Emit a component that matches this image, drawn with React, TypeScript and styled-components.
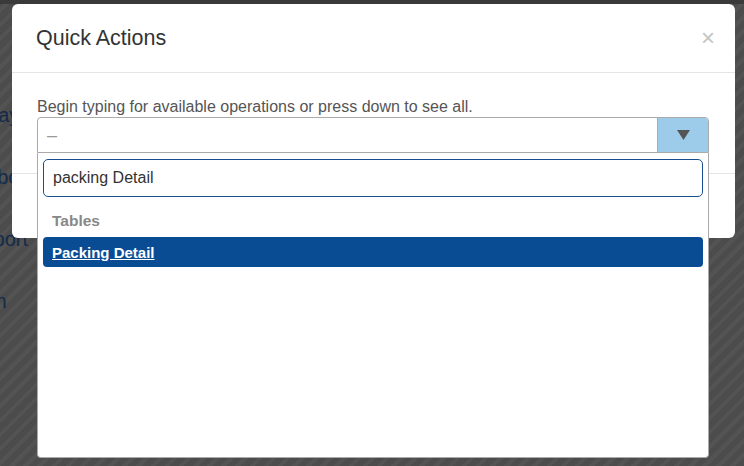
import React from "react";
import styled, { createGlobalStyle } from "styled-components";

const GlobalStyle = createGlobalStyle`
  html, body {
    margin: 0;
    padding: 0;
    height: 100%;
  }
  body {
    font-family: "Liberation Sans", Arial, Helvetica, sans-serif;
    background: repeating-linear-gradient(
      -45deg,
      #4c4c4c 0px,
      #4c4c4c 6px,
      #535353 6px,
      #535353 10px
    );
    overflow: hidden;
  }
`;

const Page = styled.div`
  position: relative;
  width: 744px;
  height: 466px;
  overflow: hidden;
`;

const TopBand = styled.div`
  height: 4px;
  background: #3a3a3a;
`;

const NavList = styled.nav`
  display: flex;
  flex-direction: column;
  padding-top: 100px;
  gap: 40px;
`;

const NavItem = styled.a<{ $shift: number }>`
  display: block;
  margin-left: ${(p) => -p.$shift}px;
  font-size: 20px;
  line-height: 22px;
  color: #132b4a;
  white-space: nowrap;
`;

const Modal = styled.div`
  position: absolute;
  left: 12px;
  top: 4px;
  width: 723px;
  height: 234px;
  background: #fff;
  border-radius: 6px;
  display: flex;
  flex-direction: column;
`;

const Header = styled.div`
  height: 68px;
  border-bottom: 1px solid #e5e5e5;
  display: flex;
  align-items: center;
  justify-content: space-between;
  padding: 0 20px 0 24px;
`;

const Title = styled.h4`
  margin: 0;
  font-size: 21.5px;
  font-weight: 400;
  color: #333;
`;

const Close = styled.button`
  border: 0;
  background: none;
  padding: 0;
  font-family: "Liberation Sans", Arial, sans-serif;
  font-size: 24px;
  font-weight: 400;
  line-height: 1;
  color: #c4c4c4;
`;

const Body = styled.div`
  padding: 24px 26px 20px 25px;
  border-bottom: 1px solid #e5e5e5;
`;

const Label = styled.label`
  display: block;
  font-size: 16px;
  line-height: 20px;
  color: #555;
`;

const SelectWrap = styled.div`
  position: relative;
`;

const SelectBox = styled.div`
  display: flex;
  height: 34px;
  border: 1px solid #aaa;
  border-radius: 4px 4px 0 0;
  background: #fff;
`;

const Placeholder = styled.span`
  flex: 1;
  display: flex;
  align-items: center;
  padding-left: 9px;
  color: #999;
  font-size: 18px;
`;

const ArrowBtn = styled.div`
  width: 50px;
  border-left: 1px solid #aaa;
  background: #9dcceb;
  border-top-right-radius: 3px;
  display: flex;
  align-items: center;
  justify-content: center;
`;

const Dropdown = styled.div`
  position: absolute;
  left: 0;
  right: 0;
  top: 36px;
  height: 305px;
  box-sizing: border-box;
  border: 1px solid #aaa;
  border-top: 0;
  border-radius: 0 0 4px 4px;
  background: #fff;
  padding: 6px 5px;
  z-index: 10;
`;

const Search = styled.input`
  display: block;
  width: 100%;
  box-sizing: border-box;
  height: 38px;
  border: 1px solid #1a4f8e;
  border-radius: 5px;
  padding: 0 9px;
  font-family: "Liberation Sans", Arial, sans-serif;
  font-size: 16px;
  color: #333;
  outline: none;
`;

const GroupLabel = styled.div`
  padding: 14px 9px 6px;
  font-size: 15.5px;
  line-height: 20px;
  font-weight: 700;
  color: #888;
`;

const Option = styled.div<{ $active?: boolean }>`
  height: 30px;
  display: flex;
  align-items: center;
  padding: 0 9px;
  border-radius: 4px;
  background: ${(p) => (p.$active ? "#0a4c94" : "transparent")};
  color: ${(p) => (p.$active ? "#fff" : "#333")};
  font-size: 15px;
  font-weight: 700;
  text-decoration: underline;
`;

export default function App() {
  return (
    <>
      <GlobalStyle />
      <Page>
        <TopBand />
        <NavList>
          <NavItem $shift={34}>Today</NavItem>
          <NavItem $shift={25}>Labor</NavItem>
          <NavItem $shift={32}>Report</NavItem>
          <NavItem $shift={50}>Admin</NavItem>
        </NavList>
        <Modal>
          <Header>
            <Title>Quick Actions</Title>
            <Close aria-label="Close">×</Close>
          </Header>
          <Body>
            <Label>Begin typing for available operations or press down to see all.</Label>
            <SelectWrap>
              <SelectBox>
                <Placeholder>–</Placeholder>
                <ArrowBtn>
                  <svg width="13" height="10" viewBox="0 0 13 10">
                    <path d="M0 0 H13 L6.5 10 Z" fill="#555" />
                  </svg>
                </ArrowBtn>
              </SelectBox>
              <Dropdown>
                <Search defaultValue="packing Detail" />
                <GroupLabel>Tables</GroupLabel>
                <Option $active>Packing Detail</Option>
              </Dropdown>
            </SelectWrap>
          </Body>
        </Modal>
      </Page>
    </>
  );
}
